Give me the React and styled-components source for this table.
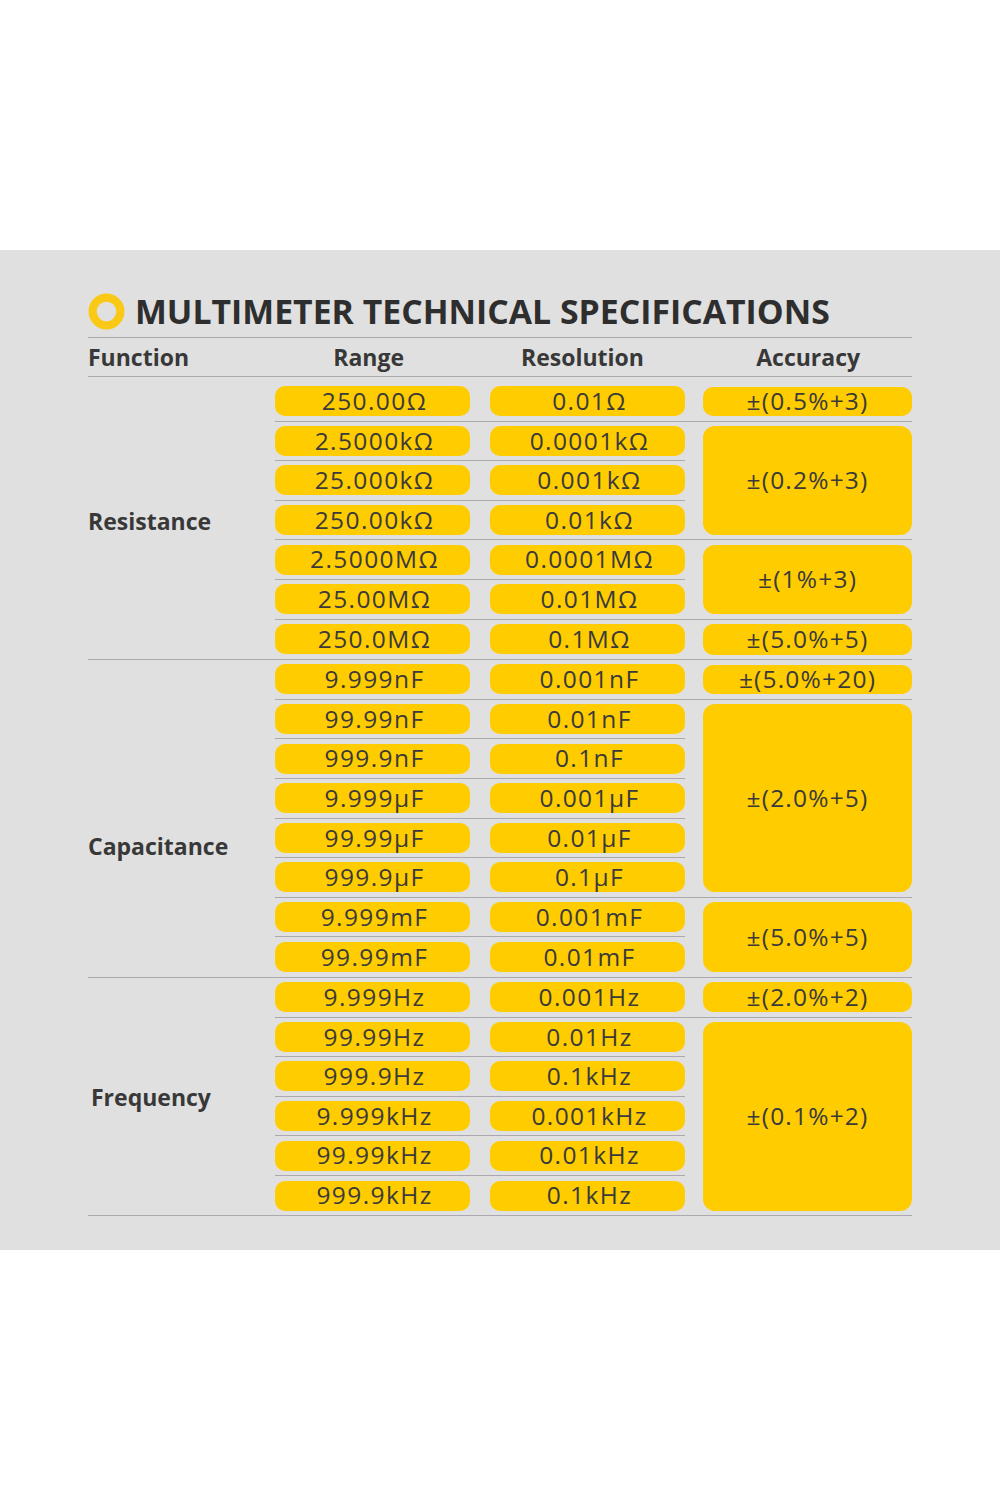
import React from 'react';
import styled, { createGlobalStyle } from 'styled-components';

const Global = createGlobalStyle`
  html, body { margin: 0; padding: 0; background: #ffffff; }
  body { font-family: "Open Sans", "Liberation Sans", sans-serif; color: #333333; }
  * { box-sizing: border-box; }
`;

const LINE = '#a9a9af';
const YELLOW = '#ffcc00';

const Page = styled.div`
  padding-top: 250px;
  height: 1500px;
`;

const Panel = styled.section`
  background: #e0e0e0;
  height: 1000px;
  padding: 40px 88px 0 88px;
`;

const TitleRow = styled.div`
  display: flex;
  align-items: center;
  gap: 10px;
  height: 48px;
  padding-bottom: 4px;
  border-bottom: 1.5px solid ${LINE};
`;

const Ring = styled.svg`
  width: 37px;
  height: 37px;
  flex: none;
`;

const Title = styled.h1`
  margin: 0;
  font-size: 33.8px;
  font-weight: 700;
  color: #2e2e2e;
  letter-spacing: 0;
  line-height: 1;
  white-space: nowrap;
`;

const HeaderRow = styled.div`
  display: flex;
  align-items: center;
  height: 39px;
  border-bottom: 1.5px solid ${LINE};
  margin-bottom: 5px;
`;

const HeaderCell = styled.div`
  width: ${p => p.$w}px;
  margin-left: ${p => p.$ml || 0}px;
  text-align: ${p => p.$align || 'center'};
  font-size: 23px;
  font-weight: 700;
  color: #383838;
  line-height: 1;
`;

const Group = styled.div`
  display: grid;
  grid-template-columns: 187px 410px 227px;
  grid-template-rows: repeat(${p => p.$rows}, 39.6px);
  border-bottom: 1.5px solid ${LINE};
`;

const FunctionCell = styled.div`
  grid-column: 1;
  grid-row: 1 / -1;
  display: flex;
  align-items: center;
  padding-top: ${p => p.$offset || 0}px;
  padding-left: ${p => p.$indent || 0}px;
  font-size: 23px;
  font-weight: 700;
  color: #383838;
`;

const PairRow = styled.div`
  grid-column: 2;
  display: flex;
  align-items: center;
  justify-content: space-between;
  border-bottom: ${p => (p.$last ? 'none' : `1.5px solid ${LINE}`)};
`;

const Pill = styled.div`
  width: 195px;
  height: 30px;
  border-radius: 10px;
  background: ${YELLOW};
  display: flex;
  align-items: center;
  justify-content: center;
  padding-left: 4px;
  font-size: 24.5px;
  font-weight: 400;
  letter-spacing: 1.4px;
  color: #3a3a3a;
  line-height: 1;
`;

const AccCell = styled.div`
  grid-column: 3;
  grid-row: span ${p => p.$span};
  display: flex;
  padding: 4.5px 0 4.5px 18px;
  border-bottom: ${p => (p.$last ? 'none' : `1.5px solid ${LINE}`)};
`;

const AccBlock = styled.div`
  flex: 1;
  border-radius: ${p => (p.$span > 1 ? 12 : 10)}px;
  background: ${YELLOW};
  display: flex;
  align-items: center;
  justify-content: center;
  font-size: 24.5px;
  font-weight: 400;
  letter-spacing: 1.2px;
  color: #3a3a3a;
  line-height: 1;
`;

const groups = [
  {
    name: 'Resistance',
    offset: 0,
    indent: 0,
    rows: [
      ['250.00Ω', '0.01Ω'],
      ['2.5000kΩ', '0.0001kΩ'],
      ['25.000kΩ', '0.001kΩ'],
      ['250.00kΩ', '0.01kΩ'],
      ['2.5000MΩ', '0.0001MΩ'],
      ['25.00MΩ', '0.01MΩ'],
      ['250.0MΩ', '0.1MΩ'],
    ],
    acc: [
      ['±(0.5%+3)', 1],
      ['±(0.2%+3)', 3],
      ['±(1%+3)', 2],
      ['±(5.0%+5)', 1],
    ],
  },
  {
    name: 'Capacitance',
    offset: 55,
    indent: 0,
    rows: [
      ['9.999nF', '0.001nF'],
      ['99.99nF', '0.01nF'],
      ['999.9nF', '0.1nF'],
      ['9.999µF', '0.001µF'],
      ['99.99µF', '0.01µF'],
      ['999.9µF', '0.1µF'],
      ['9.999mF', '0.001mF'],
      ['99.99mF', '0.01mF'],
    ],
    acc: [
      ['±(5.0%+20)', 1],
      ['±(2.0%+5)', 5],
      ['±(5.0%+5)', 2],
    ],
  },
  {
    name: 'Frequency',
    offset: 0,
    indent: 3,
    rows: [
      ['9.999Hz', '0.001Hz'],
      ['99.99Hz', '0.01Hz'],
      ['999.9Hz', '0.1kHz'],
      ['9.999kHz', '0.001kHz'],
      ['99.99kHz', '0.01kHz'],
      ['999.9kHz', '0.1kHz'],
    ],
    acc: [
      ['±(2.0%+2)', 1],
      ['±(0.1%+2)', 5],
    ],
  },
];

export default function App() {
  return (
    <Page>
      <Global />
      <Panel>
        <TitleRow>
          <Ring viewBox="0 0 36 36">
            <circle cx="18" cy="18" r="13.5" fill="none" stroke="#fac916" strokeWidth="8" />
          </Ring>
          <Title>MULTIMETER TECHNICAL SPECIFICATIONS</Title>
        </TitleRow>
        <HeaderRow>
          <HeaderCell $w={187} $align="left">Function</HeaderCell>
          <HeaderCell $w={195} $ml={-2}>Range</HeaderCell>
          <HeaderCell $w={195} $ml={20}>Resolution</HeaderCell>
          <HeaderCell $w={209} $ml={25}>Accuracy</HeaderCell>
        </HeaderRow>
        {groups.map(g => (
          <Group key={g.name} $rows={g.rows.length}>
            <FunctionCell $offset={g.offset} $indent={g.indent}>{g.name}</FunctionCell>
            {g.rows.map((r, i) => (
              <PairRow
                key={r[0]}
                $last={i === g.rows.length - 1}
                style={{ gridRow: i + 1 }}
              >
                <Pill>{r[0]}</Pill>
                <Pill>{r[1]}</Pill>
              </PairRow>
            ))}
            {g.acc.map((a, i) => (
              <AccCell key={a[0] + i} $span={a[1]} $last={i === g.acc.length - 1}>
                <AccBlock $span={a[1]}>{a[0]}</AccBlock>
              </AccCell>
            ))}
          </Group>
        ))}
      </Panel>
    </Page>
  );
}
